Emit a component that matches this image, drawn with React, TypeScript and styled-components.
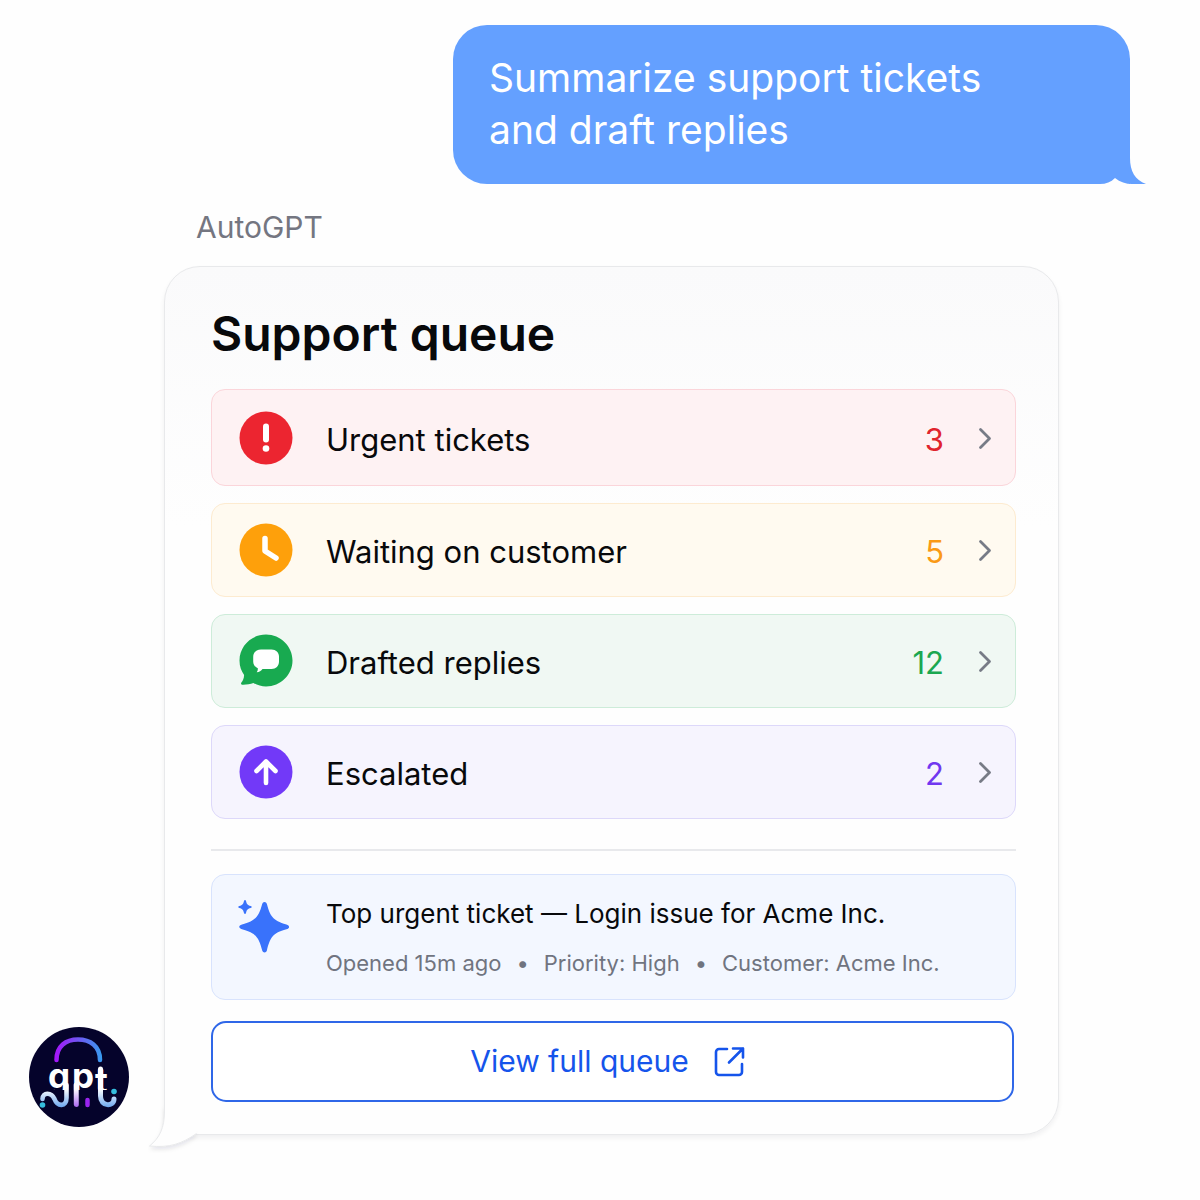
import React from "react";
import styled, { createGlobalStyle } from "styled-components";

const GlobalStyle = createGlobalStyle`
  *, *::before, *::after { box-sizing: border-box; }
  body {
    margin: 0;
    background: #fefefe;
    color: #08090b;
    font-family: Inter, "Liberation Sans", sans-serif;
  }
  h1, h2, p, ul { margin: 0; padding: 0; }
  button { font: inherit; color: inherit; }
  svg { display: block; flex: none; }
`;

const Thread = styled.main`
  display: flex;
  flex-direction: column;
  padding: 25px 70px 56px 29px;
`;

const UserBubble = styled.div`
  position: relative;
  align-self: flex-end;
  width: 100%;
  max-width: 677px;
  padding: 27px 36px 28px;
  border-radius: 34px 34px 0 34px;
  background: #64a0ff;
  color: #fff;
  font-size: 39px;
  line-height: 52px;
`;

const UserTail = styled.svg`
  position: absolute;
  right: -16px;
  bottom: 0;
`;

const Reply = styled.section`
  display: flex;
  align-items: flex-end;
  gap: 35px;
  margin: 24px 71px 0 0;
`;

const Avatar = styled.svg`
  margin-bottom: 8px;
`;

const ReplyBody = styled.div`
  flex: 1;
  min-width: 0;
`;

const Sender = styled.p`
  padding-left: 32px;
  color: #747681;
  font-size: 30px;
  line-height: 38px;
`;

const Card = styled.article`
  position: relative;
  margin-top: 20px;
  padding: 39px 42px 32px 46px;
  border: 1px solid #e8e9eb;
  border-radius: 36px 36px 36px 0;
  background: linear-gradient(#fafafb, #fefefe 30%);
  box-shadow: 0 3px 5px rgba(20, 25, 40, 0.06);
`;

const CardTail = styled.svg`
  position: absolute;
  left: -17px;
  bottom: -19px;
`;

const Title = styled.h1`
  font-size: 48px;
  font-weight: 600;
  line-height: 56px;
`;

const QueueList = styled.ul`
  display: flex;
  flex-direction: column;
  gap: 17px;
  margin-top: 27px;
  list-style: none;
`;

const QueueRow = styled.button<{ $fill: string; $edge: string; $tall?: boolean }>`
  display: flex;
  align-items: center;
  width: 100%;
  padding: ${(p) => (p.$tall ? "21px 21px 20px 27px" : "19px 21px 19px 27px")};
  border: 1px solid ${(p) => p.$edge};
  border-radius: 14px;
  background: ${(p) => p.$fill};
  text-align: left;
  cursor: pointer;
`;

const RowLabel = styled.span`
  flex: 1;
  padding: 3px 0 0 33px;
  font-size: 31px;
  line-height: 40px;
`;

const RowCount = styled.span<{ $color: string }>`
  padding-top: 3px;
  margin-right: 32px;
  color: ${(p) => p.$color};
  font-size: 31px;
  line-height: 40px;
`;

const Divider = styled.hr`
  height: 2px;
  margin: 30px 0 23px;
  border: 0;
  background: #e8e9ec;
`;

const TicketCard = styled.section`
  display: flex;
  align-items: flex-start;
  gap: 35px;
  padding: 21px 26px;
  border: 1px solid #d8e3fd;
  border-radius: 14px;
  background: #f3f7ff;
`;

const TicketText = styled.div`
  display: flex;
  flex-direction: column;
  gap: 16px;
`;

const TicketTitle = styled.h2`
  font-size: 26px;
  font-weight: 400;
  line-height: 36px;
`;

const TicketMeta = styled.ul`
  display: flex;
  flex-wrap: wrap;
  color: #70747f;
  font-size: 22px;
  line-height: 30px;
  list-style: none;

  li + li::before {
    content: "•";
    margin: 0 15px;
  }
`;

const QueueButton = styled.button`
  display: flex;
  justify-content: center;
  align-items: center;
  gap: 24px;
  width: calc(100% - 2px);
  margin-top: 21px;
  padding: 18px 26px 18px 16px;
  border: 2px solid #2f67e8;
  border-radius: 15px;
  background: #fff;
  color: #1554eb;
  font-size: 30px;
  line-height: 41px;
  cursor: pointer;
`;

const UrgentIcon = () => (
  <svg width="54" height="54" viewBox="0 0 54 54" aria-hidden="true">
    <circle cx="27" cy="27" r="26.5" fill="#ec2530" />
    <path d="M27 15.500v13" stroke="#fff" strokeWidth="6" strokeLinecap="round" />
    <circle cx="27" cy="37.500" r="3.300" fill="#fff" />
  </svg>
);

const ClockIcon = () => (
  <svg width="54" height="54" viewBox="0 0 54 54" aria-hidden="true">
    <circle cx="27" cy="27" r="26.5" fill="#fea00b" />
    <path d="M26 15.500v12.500l11 7" fill="none" stroke="#fff" strokeWidth="5.500" strokeLinecap="round" strokeLinejoin="round" />
  </svg>
);

const ReplyIcon = () => (
  <svg width="54" height="54" viewBox="0 0 54 54" aria-hidden="true">
    <path
      d="M27 .5C12.500.5.5 12 .5 26.500c0 5.800 1.800 10.500 4.600 14.500C5 44.500 3.700 47 2.400 48.500c-.8 1-.2 2.200 1 2.200 4 .1 7.800-.5 11-1.700C18 51.200 22.500 52.500 27 52.500c14.600 0 26.500-11.700 26.500-26S41.600.5 27 .5z"
      fill="#18aa50"
    />
    <path
      d="M22 15.500h10.500c4.400 0 7.500 3 7.500 7v5c0 4.500-3 7.500-7.500 7.500h-9c-1.300 2-3.200 3-5.800 3.200.9-1.200 1.300-2.500 1.100-4-2.700-1-4.600-3.500-4.600-6.700V23c0-4.500 3.300-7.500 7.800-7.500z"
      fill="#fff"
    />
  </svg>
);

const EscalatedIcon = () => (
  <svg width="54" height="54" viewBox="0 0 54 54" aria-hidden="true">
    <circle cx="27" cy="27" r="26.5" fill="#7239f8" />
    <path d="M27 38V17M17.500 26l9.500-9.500 9.500 9.500" fill="none" stroke="#fff" strokeWidth="4.600" strokeLinecap="round" strokeLinejoin="round" />
  </svg>
);

const Chevron = () => (
  <svg width="18" height="24" viewBox="0 0 18 24" aria-hidden="true">
    <path d="M4.500 3.500l9 9-9 9" fill="none" stroke="#777b86" strokeWidth="2.800" strokeLinecap="round" strokeLinejoin="round" />
  </svg>
);

const Sparkles = () => (
  <svg width="53" height="58" viewBox="0 0 53 58" aria-hidden="true">
    <path
      transform="translate(0 2)"
      d="M26.500 4c1.200 0 2 .7 2.400 2 3 11.500 5.500 16.500 19.500 20.500 3.600 1.100 3.600 3.700 0 4.800C34.500 35 32 40 28.900 52.500c-.6 2.600-4 2.600-4.700 0C21 40 18.500 35 4 31.200c-3.700-1-3.700-3.700 0-4.700C18.500 22.500 21 17.500 24.200 6c.4-1.300 1.100-2 2.300-2z"
      fill="#3972fb"
    />
    <path
      transform="translate(0 2)"
      d="M7 2c.6 0 .8.400 1 1 .8 3.200 1.300 4 4.700 5 1.500.4 1.500 1.600 0 2-3.400 1-3.900 1.800-4.700 5-.3 1.300-1.700 1.300-2 0-.8-3.200-1.300-4-4.700-5-1.500-.4-1.500-1.600 0-2 3.400-1 3.900-1.800 4.700-5 .2-.6.400-1 1-1z"
      fill="#3972fb"
    />
  </svg>
);

const OpenIcon = () => (
  <svg width="32" height="32" viewBox="0 0 32 32" fill="none" stroke="currentColor" strokeWidth="2.600" strokeLinecap="round" strokeLinejoin="round" aria-hidden="true">
    <path d="M14 3H6a3 3 0 0 0-3 3v20a3 3 0 0 0 3 3h20a3 3 0 0 0 3-3v-8M20 2.500h10v9M30 2.500L16 16.500" />
  </svg>
);

const AutoGptAvatar = () => (
  <Avatar width="100" height="100" viewBox="0 0 100 100" role="img" aria-label="AutoGPT">
    <defs>
      <linearGradient id="arc" x1="25" y1="0" x2="73" y2="0" gradientUnits="userSpaceOnUse">
        <stop stopColor="#a812fa" />
        <stop offset="0.5" stopColor="#7055f2" />
        <stop offset="1" stopColor="#389cf0" />
      </linearGradient>
      <linearGradient id="blue" x1="0" y1="62" x2="0" y2="81" gradientUnits="userSpaceOnUse">
        <stop stopColor="#fff" />
        <stop offset="1" stopColor="#66a3ee" />
      </linearGradient>
      <linearGradient id="violet" x1="0" y1="62" x2="0" y2="80" gradientUnits="userSpaceOnUse">
        <stop stopColor="#fff" />
        <stop offset="1" stopColor="#aa66f0" />
      </linearGradient>
      <clipPath id="bowls">
        <rect x="16" y="36" width="66" height="27" />
      </clipPath>
    </defs>
    <circle cx="50" cy="50" r="50" fill="#05032b" />
    <path d="M27.500 33C27.500 19 37 12.500 49 12.500S71 19 71 33" fill="none" stroke="url(#arc)" strokeWidth="4.500" strokeLinecap="round" />
    <g fill="#fff" fontFamily="Inter, sans-serif" fontWeight="700" clipPath="url(#bowls)">
      <text x="19" y="61" fontSize="35">g</text>
      <text x="43" y="61" fontSize="35">p</text>
      <text x="66" y="66" fontSize="35">t</text>
    </g>
    <path d="M37.500 58v13c0 9-9 9-12 1-3-7-12-7-12 0" fill="none" stroke="url(#blue)" strokeWidth="4.600" strokeLinecap="round" />
    <path d="M47.200 58l.1 19.500" stroke="url(#violet)" strokeWidth="5" strokeLinecap="round" />
    <path d="M58.500 73v5" stroke="#9a24ef" strokeWidth="4.500" strokeLinecap="round" />
    <path d="M71.500 42v27c0 11 13.500 11 13.500 3" fill="none" stroke="url(#blue)" strokeWidth="5" strokeLinecap="round" />
    <circle cx="13.500" cy="78" r="2.800" fill="#35bddd" />
    <circle cx="85" cy="64.500" r="2.800" fill="#35bddd" />
  </Avatar>
);

const queues = [
  { label: "Urgent tickets", count: 3, color: "#e0242d", fill: "#fef2f3", edge: "#fbd5da", Icon: UrgentIcon, tall: true },
  { label: "Waiting on customer", count: 5, color: "#fa9a16", fill: "#fffaf0", edge: "#fdebd0", Icon: ClockIcon },
  { label: "Drafted replies", count: 12, color: "#1ba750", fill: "#f0f8f3", edge: "#cdecd9", Icon: ReplyIcon },
  { label: "Escalated", count: 2, color: "#7137f0", fill: "#f6f4fe", edge: "#ddd8fa", Icon: EscalatedIcon },
];

export default function App() {
  return (
    <>
      <GlobalStyle />
      <Thread>
        <UserBubble>
          Summarize support tickets
          <br />
          and draft replies
          <UserTail width="56" height="34" viewBox="0 0 56 34" aria-hidden="true">
            <path d="M10 34c6 0 11-2 15-6 5 4 11 6 17 6z" fill="#fefefe" />
            <path d="M39 8h1c0 13 5 22 16 26H42c-1.500 0-3-.2-3-.2z" fill="#64a0ff" />
          </UserTail>
        </UserBubble>

        <Reply>
          <AutoGptAvatar />
          <ReplyBody>
            <Sender>AutoGPT</Sender>
            <Card>
              <Title>Support queue</Title>
              <QueueList>
                {queues.map(({ label, count, color, fill, edge, Icon, tall }) => (
                  <li key={label}>
                    <QueueRow type="button" $fill={fill} $edge={edge} $tall={tall}>
                      <Icon />
                      <RowLabel>{label}</RowLabel>
                      <RowCount $color={color}>{count}</RowCount>
                      <Chevron />
                    </QueueRow>
                  </li>
                ))}
              </QueueList>
              <Divider />
              <TicketCard>
                <Sparkles />
                <TicketText>
                  <TicketTitle>Top urgent ticket — Login issue for Acme Inc.</TicketTitle>
                  <TicketMeta>
                    <li>Opened 15m ago</li>
                    <li>Priority: High</li>
                    <li>Customer: Acme Inc.</li>
                  </TicketMeta>
                </TicketText>
              </TicketCard>
              <QueueButton type="button">
                View full queue
                <OpenIcon />
              </QueueButton>
              <CardTail width="54" height="48" viewBox="0 0 54 48" aria-hidden="true">
                <defs>
                  <filter id="tailShadow" x="-20%" y="-20%" width="140%" height="160%">
                    <feDropShadow dx="0" dy="3" stdDeviation="2" floodColor="#141928" floodOpacity="0.1" />
                  </filter>
                </defs>
                <path d="M16.500 0v6c0 17-5 27-15 35 20 2 32-2 47-12.500" fill="#fefefe" filter="url(#tailShadow)" />
                <path d="M16.500 0v6c0 17-5 27-15 35 20 2 32-2 47-12.500V0z" fill="#fefefe" />
                <path d="M16.500 0v6c0 17-5 27-15 35 20 2 32-2 47-12.500" fill="none" stroke="#e8e9eb" />
              </CardTail>
            </Card>
          </ReplyBody>
        </Reply>
      </Thread>
    </>
  );
}
